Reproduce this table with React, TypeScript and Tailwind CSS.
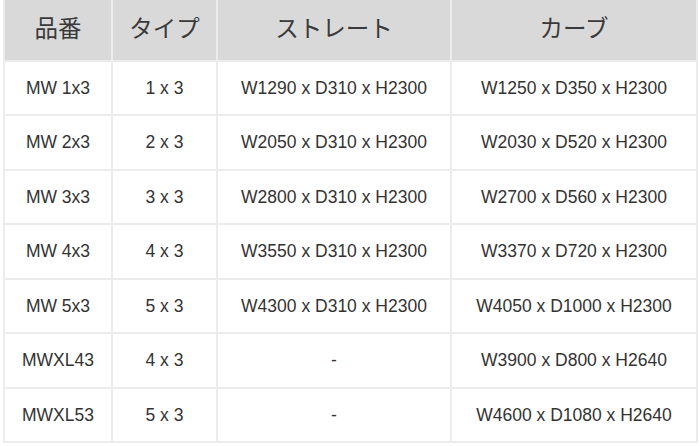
const rows: [string, string, string, string][] = [
  ['MW 1x3', '1 x 3', 'W1290 x D310 x H2300', 'W1250 x D350 x H2300'],
  ['MW 2x3', '2 x 3', 'W2050 x D310 x H2300', 'W2030 x D520 x H2300'],
  ['MW 3x3', '3 x 3', 'W2800 x D310 x H2300', 'W2700 x D560 x H2300'],
  ['MW 4x3', '4 x 3', 'W3550 x D310 x H2300', 'W3370 x D720 x H2300'],
  ['MW 5x3', '5 x 3', 'W4300 x D310 x H2300', 'W4050 x D1000 x H2300'],
  ['MWXL43', '4 x 3', '-', 'W3900 x D800 x H2640'],
  ['MWXL53', '5 x 3', '-', 'W4600 x D1080 x H2640'],
];

export default function App() {
  return (
    <div
      className="w-[700px] h-[446px] bg-white pl-[3px] overflow-hidden"
      style={{ fontFamily: '"Liberation Sans", "Noto Sans CJK JP", sans-serif' }}
    >
      <table className="w-[693px] table-fixed border-collapse text-[#333]">
        <colgroup>
          <col className="w-[108px]" />
          <col className="w-[105px]" />
          <col className="w-[234px]" />
          <col className="w-[246px]" />
        </colgroup>
        <thead>
          <tr className="h-[61px] bg-[#d9d9d9]">
            {['品番', 'タイプ', 'ストレート', 'カーブ'].map((h) => (
              <th
                key={h}
                className="border-2 border-t-0 border-[#ececec] text-[23.5px] font-normal text-center text-[#3a3a3a]"
              >
                {h}
              </th>
            ))}
          </tr>
        </thead>
        <tbody>
          {rows.map((r, i) => (
            <tr key={i} className={i % 2 === 0 ? 'h-[54px]' : 'h-[55px]'}>
              {r.map((c, j) => (
                <td key={j} className="border-2 border-[#ececec] text-[17.5px] text-center">
                  {c}
                </td>
              ))}
            </tr>
          ))}
        </tbody>
      </table>
    </div>
  );
}
